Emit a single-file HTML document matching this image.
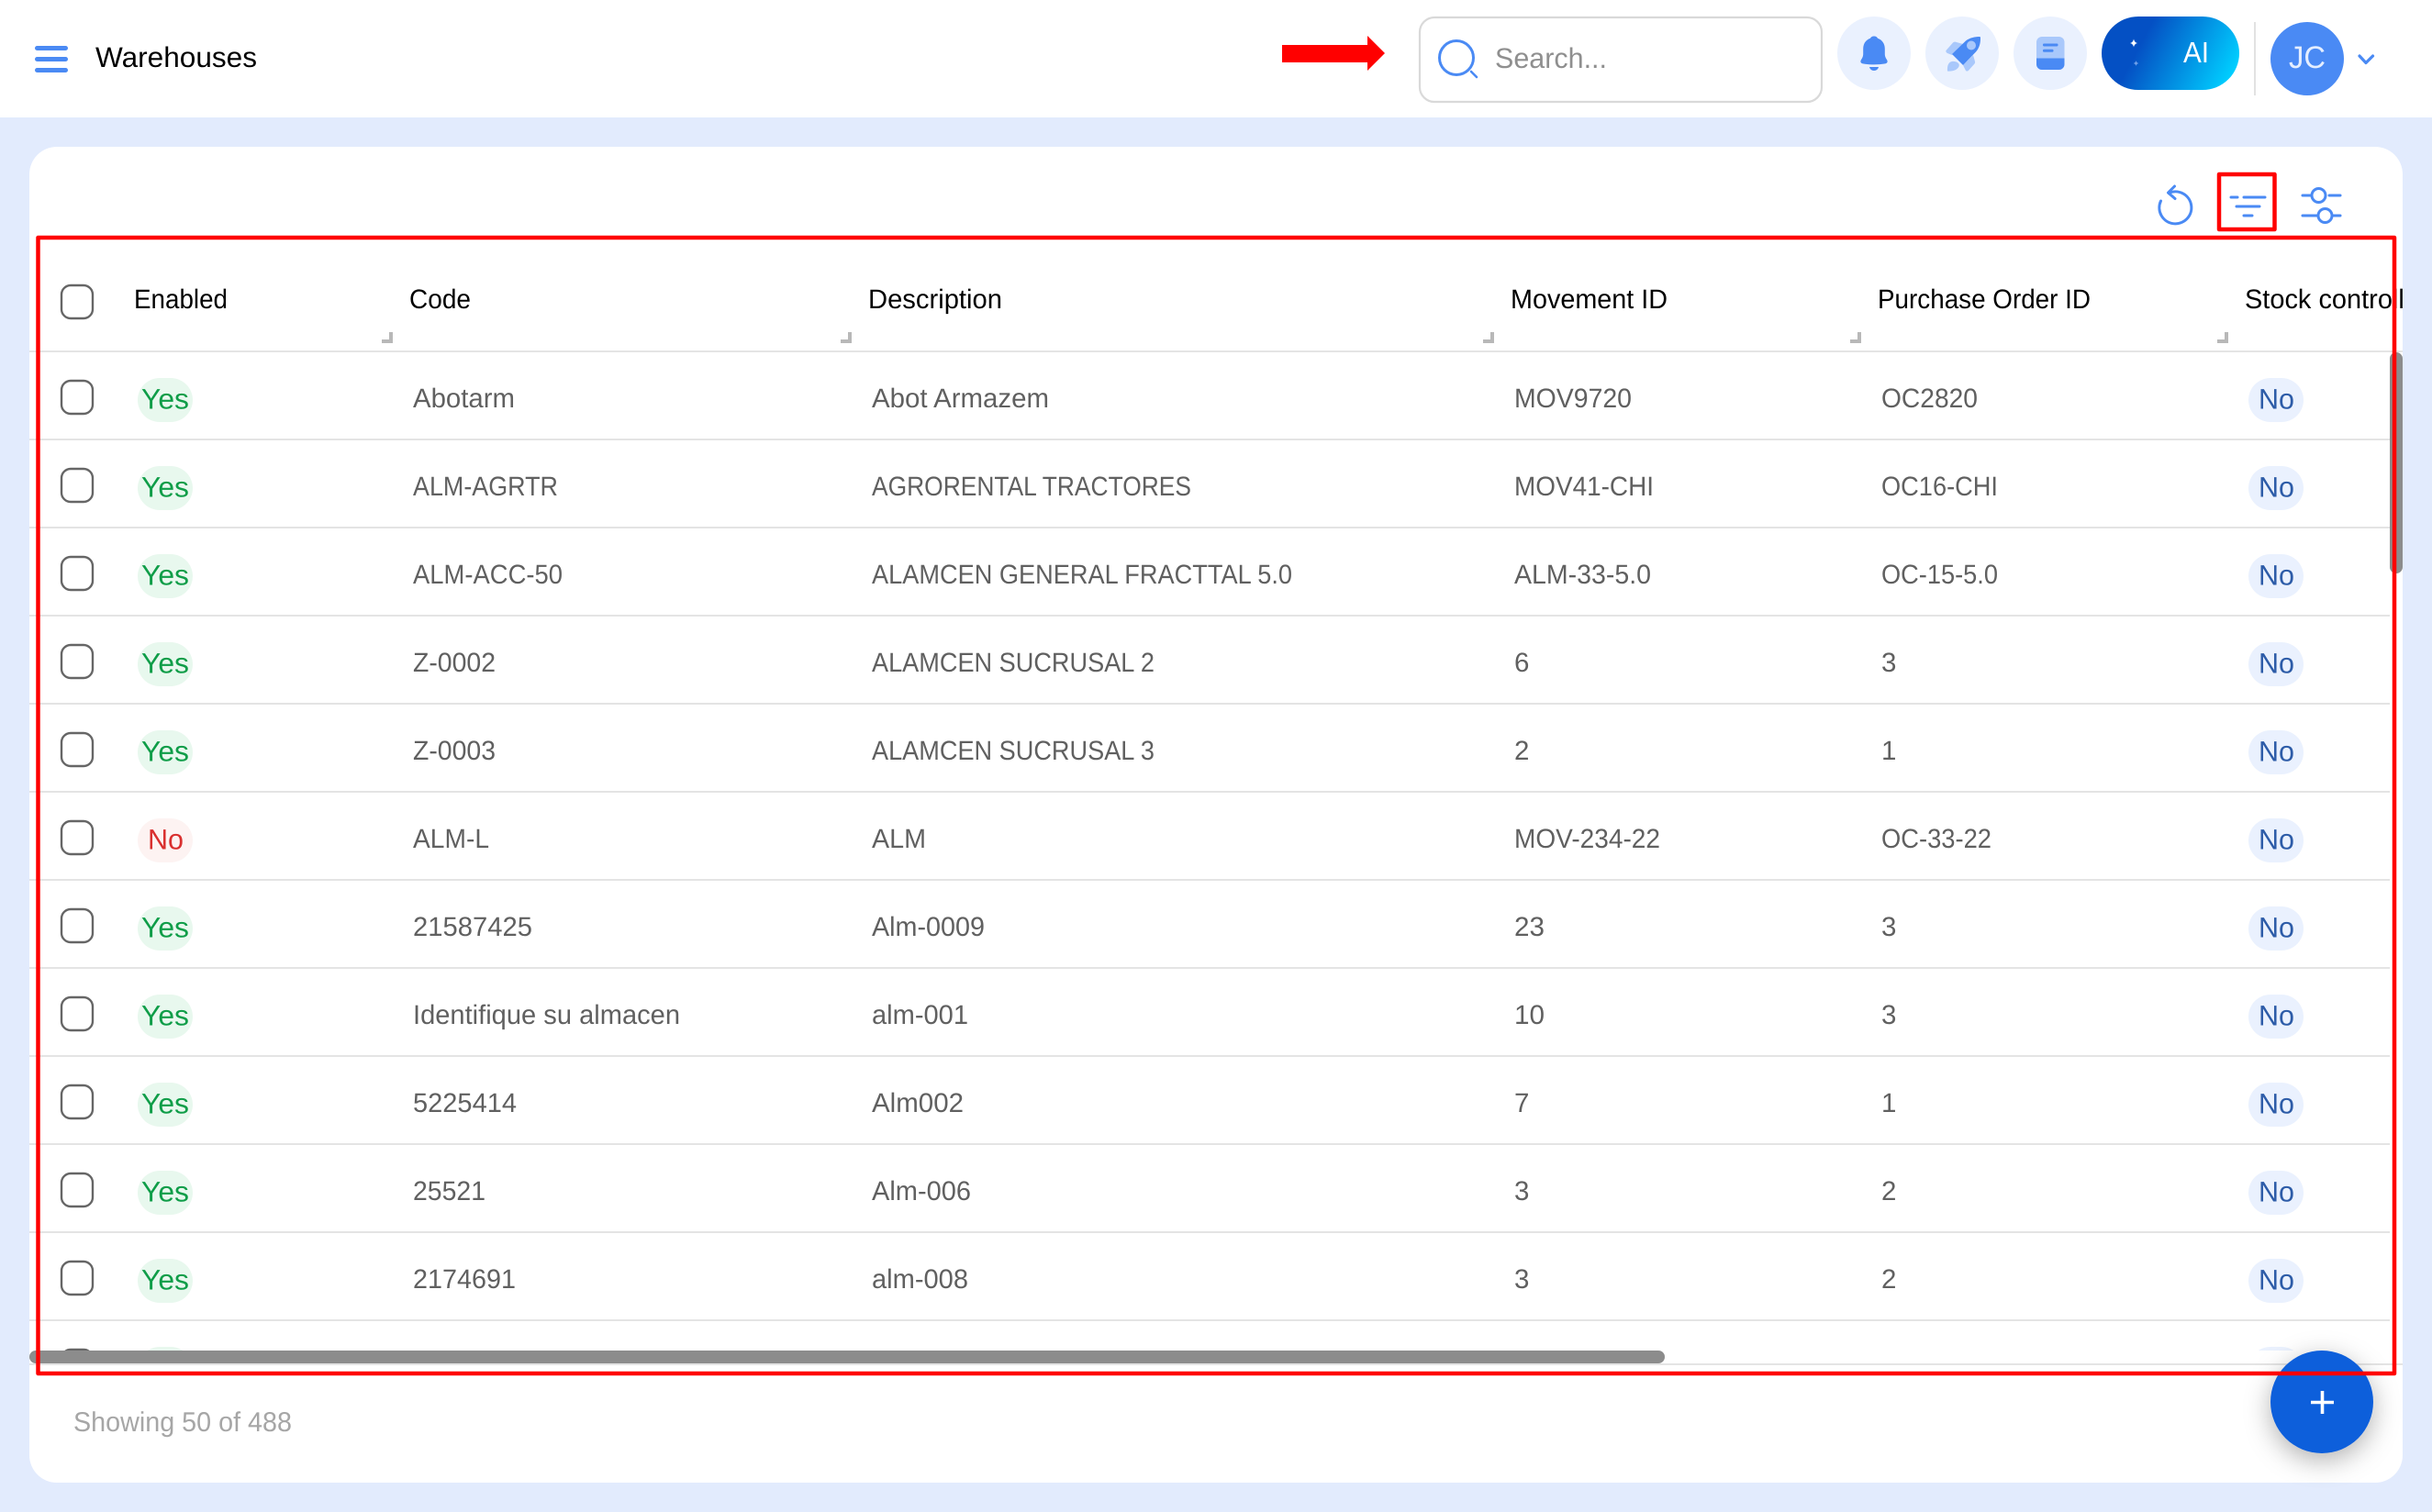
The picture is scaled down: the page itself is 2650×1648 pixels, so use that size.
<!DOCTYPE html>
<html lang="en">
<head>
<meta charset="utf-8">
<title>Warehouses</title>
<style>
html,body{margin:0;padding:0;background:#e2ebfd;width:2650px;height:1648px;overflow:hidden}
svg{display:block}
text{font-family:"Liberation Sans",sans-serif;font-size:29.5px;text-rendering:geometricPrecision}
.h{fill:#000}
.c{fill:#606060}
.y{fill:#0f9d48;font-size:31px}
.n{fill:#2d5ca8;font-size:31px}
.r{fill:#d9302f;font-size:31px}
.cb{fill:#fff;stroke:#666;stroke-width:2.4}
.ln{fill:#e4e4e4}
.ic{fill:none;stroke:#4a8af4;stroke-width:3;stroke-linecap:round;stroke-linejoin:round}
.hd{fill:none;stroke:#b8b8b8;stroke-width:4}
</style>
</head>
<body>
<svg xmlns="http://www.w3.org/2000/svg" width="2650" height="1648" viewBox="0 0 2650 1648">
<defs>
<linearGradient id="ai" x1="0.12" y1="0.35" x2="1" y2="0.6">
<stop offset="0.18" stop-color="#0450c4"/>
<stop offset="1" stop-color="#00ceff"/>
</linearGradient>
<clipPath id="tbl"><rect x="32" y="262" width="2586" height="1210"/></clipPath>
<clipPath id="hdr"><rect x="32" y="262" width="2586" height="120"/></clipPath>
<filter id="sh" x="-60%" y="-60%" width="220%" height="220%"><feDropShadow dx="0" dy="8" stdDeviation="14" flood-color="#000" flood-opacity=".3"/></filter>
<g id="yes"><rect x="150" y="29" width="60" height="48" rx="24" fill="#e8f8ee"/></g>
<g id="nop"><rect x="2450" y="29" width="60" height="48" rx="24" fill="#eaf1fe"/></g>
</defs>

<!-- Page -->
<rect width="2650" height="1648" fill="#e2ebfd"/>
<rect width="2650" height="128" fill="#fff"/>

<!-- Header -->
<rect x="38" y="50" width="36" height="5" rx="2.5" fill="#4a8af4"/>
<rect x="38" y="62" width="36" height="5" rx="2.5" fill="#4a8af4"/>
<rect x="38" y="74" width="36" height="5" rx="2.5" fill="#4a8af4"/>
<text x="104" y="73" style="font-size:31px" fill="#000" textLength="176" lengthAdjust="spacingAndGlyphs">Warehouses</text>

<path d="M1397 49H1490V39L1509 58L1490 77V68H1397Z" fill="#f00"/>

<rect x="1547" y="19" width="438" height="92" rx="16" fill="#fff" stroke="#d9d9d9" stroke-width="2.2"/>
<circle cx="1587" cy="63" r="18.5" fill="none" stroke="#4a8af4" stroke-width="3"/>
<path d="M1603 78L1609 84" fill="none" stroke="#4a8af4" stroke-width="2.6" stroke-linecap="round"/>
<text x="1629" y="74" style="font-size:31px" fill="#8f8f8f" textLength="122" lengthAdjust="spacingAndGlyphs">Search...</text>

<!-- Bell -->
<circle cx="2042" cy="58" r="40" fill="#eaf1fe"/>
<path d="M2042 39.500c2.200 0 3.400 1 4 2.200c4.800 1.600 7.800 5.800 7.800 11.300v5.800c0 2.800 1 4.500 2.200 6.300c1.300 2 .6 3.700-1.700 4.300c-7.500 1.300-17.100 1.300-24.600 0c-2.300-.6-3-2.300-1.700-4.300c1.200-1.800 2.200-3.500 2.200-6.300v-5.800c0-5.500 3-9.700 7.800-11.300c.6-1.200 1.800-2.200 4-2.200z" fill="#4a8af4"/>
<path d="M2037 73h10c-.6 2.600-2.600 4-5 4s-4.400-1.400-5-4z" fill="#4a8af4"/>

<!-- Rocket -->
<circle cx="2138" cy="58" r="40" fill="#eaf1fe"/>
<path d="M2120.500 55L2128 46.500C2128.800 45.700 2130 45.500 2131 45.700L2139 48L2127 60L2122 58C2120.500 57.400 2120 56 2120.500 55Z" fill="#a9c8fb"/>
<path d="M2150 60L2152 67C2152.300 68 2152 69 2151.300 69.800L2145 76.800C2143.800 78 2142 77.800 2141.500 76L2139 71Z" fill="#a9c8fb"/>
<path d="M2122 77.500C2121.500 72 2123 67.500 2127 67C2131.500 66.500 2136 69 2134.500 72.500C2132.500 76.500 2127.500 78 2122 77.500Z" fill="#a9c8fb"/>
<path d="M2127 59L2142 44.500C2146.500 41 2152 40 2157 40C2158 40 2158 41 2158 42C2158 47.500 2156.500 52.500 2153 56.500L2139 71Z" fill="#4a8af4"/>
<circle cx="2148" cy="49.500" r="5" fill="#a9c8fb"/>

<!-- Book -->
<circle cx="2234" cy="58" r="40" fill="#eaf1fe"/>
<rect x="2219" y="40" width="30.500" height="36" rx="6" fill="#a9c8fb"/>
<path d="M2219 63.500H2249.500V70A6 6 0 0 1 2243.500 76H2225A6 6 0 0 1 2219 70Z" fill="#4a8af4"/>
<rect x="2226" y="47.500" width="16.500" height="3" rx="1.200" fill="#4a8af4"/>
<rect x="2226" y="53.800" width="11.500" height="3" rx="1.200" fill="#4a8af4"/>

<!-- AI -->
<rect x="2290" y="18" width="150" height="80" rx="40" fill="url(#ai)"/>
<path d="M2325 42.500Q2325.700 46.300 2329 47Q2325.700 47.700 2325 51.500Q2324.300 47.700 2321 47Q2324.300 46.300 2325 42.500Z" fill="#fff"/>
<path d="M2327.500 66Q2328 68.500 2330.500 69Q2328 69.500 2327.500 72Q2327 69.500 2324.500 69Q2327 68.500 2327.500 66Z" fill="#6f9fe8"/>
<text x="2379" y="68" style="font-size:32px" fill="#fff" textLength="28" lengthAdjust="spacingAndGlyphs">AI</text>

<rect x="2456" y="24" width="2" height="80" fill="#e2e2e2"/>
<circle cx="2514" cy="64" r="40" fill="#4a8af4"/>
<text x="2494" y="74" style="font-size:34px" fill="#e4eeff" textLength="40" lengthAdjust="spacingAndGlyphs">JC</text>
<path d="M2571 61L2578 68.500L2585.500 61" fill="none" stroke="#4a8af4" stroke-width="3.200" stroke-linecap="round" stroke-linejoin="round"/>

<!-- Card -->
<rect x="32" y="160" width="2586" height="1456" rx="30" fill="#fff"/>

<!-- Toolbar icons -->
<path class="ic" d="M2363 210.500A17.500 17.500 0 1 1 2354.500 219"/>
<path class="ic" d="M2369.500 203L2362.500 210L2370 216.500"/>
<path class="ic" d="M2431 215H2438M2445 215H2468M2437 225H2462M2445 235H2454"/>
<path class="ic" d="M2509 213H2518M2538 213H2550M2509 235H2525M2542 235H2550"/>
<circle class="ic" cx="2526.500" cy="213" r="7.500"/>
<circle class="ic" cx="2533.500" cy="235" r="7.500"/>

<!-- Table head -->
<g clip-path="url(#hdr)">
<rect class="cb" x="67" y="311" width="34" height="36" rx="10"/>
<text class="h" x="146" y="336" textLength="102" lengthAdjust="spacingAndGlyphs">Enabled</text>
<text class="h" x="446" y="336" textLength="67" lengthAdjust="spacingAndGlyphs">Code</text>
<text class="h" x="946" y="336" textLength="146" lengthAdjust="spacingAndGlyphs">Description</text>
<text class="h" x="1646" y="336" textLength="171" lengthAdjust="spacingAndGlyphs">Movement ID</text>
<text class="h" x="2046" y="336" textLength="232" lengthAdjust="spacingAndGlyphs">Purchase Order ID</text>
<text class="h" x="2446" y="336" textLength="206" lengthAdjust="spacingAndGlyphs">Stock controlled</text>
<path class="hd" d="M416 372H426V362M916 372H926V362M1616 372H1626V362M2016 372H2026V362M2416 372H2426V362"/>
</g>
<rect class="ln" x="32" y="382" width="2586" height="2"/>

<!-- Rows -->
<g clip-path="url(#tbl)">
<g transform="translate(0,383)">
<rect class="cb" x="67" y="32" width="34" height="36" rx="10"/><use href="#yes"/><text class="y" x="154" y="62.500" textLength="52" lengthAdjust="spacingAndGlyphs">Yes</text>
<text class="c" x="450" y="61" textLength="111" lengthAdjust="spacingAndGlyphs">Abotarm</text>
<text class="c" x="950" y="61" textLength="193" lengthAdjust="spacingAndGlyphs">Abot Armazem</text>
<text class="c" x="1650" y="61" textLength="128" lengthAdjust="spacingAndGlyphs">MOV9720</text>
<text class="c" x="2050" y="61" textLength="105" lengthAdjust="spacingAndGlyphs">OC2820</text>
<use href="#nop"/><text class="n" x="2461" y="62.500" textLength="39" lengthAdjust="spacingAndGlyphs">No</text>
<rect class="ln" x="32" y="95" width="2572" height="2"/>
</g>
<g transform="translate(0,479)">
<rect class="cb" x="67" y="32" width="34" height="36" rx="10"/><use href="#yes"/><text class="y" x="154" y="62.500" textLength="52" lengthAdjust="spacingAndGlyphs">Yes</text>
<text class="c" x="450" y="61" textLength="158" lengthAdjust="spacingAndGlyphs">ALM-AGRTR</text>
<text class="c" x="950" y="61" textLength="348" lengthAdjust="spacingAndGlyphs">AGRORENTAL TRACTORES</text>
<text class="c" x="1650" y="61" textLength="152" lengthAdjust="spacingAndGlyphs">MOV41-CHI</text>
<text class="c" x="2050" y="61" textLength="127" lengthAdjust="spacingAndGlyphs">OC16-CHI</text>
<use href="#nop"/><text class="n" x="2461" y="62.500" textLength="39" lengthAdjust="spacingAndGlyphs">No</text>
<rect class="ln" x="32" y="95" width="2572" height="2"/>
</g>
<g transform="translate(0,575)">
<rect class="cb" x="67" y="32" width="34" height="36" rx="10"/><use href="#yes"/><text class="y" x="154" y="62.500" textLength="52" lengthAdjust="spacingAndGlyphs">Yes</text>
<text class="c" x="450" y="61" textLength="163" lengthAdjust="spacingAndGlyphs">ALM-ACC-50</text>
<text class="c" x="950" y="61" textLength="458" lengthAdjust="spacingAndGlyphs">ALAMCEN GENERAL FRACTTAL 5.0</text>
<text class="c" x="1650" y="61" textLength="149" lengthAdjust="spacingAndGlyphs">ALM-33-5.0</text>
<text class="c" x="2050" y="61" textLength="127" lengthAdjust="spacingAndGlyphs">OC-15-5.0</text>
<use href="#nop"/><text class="n" x="2461" y="62.500" textLength="39" lengthAdjust="spacingAndGlyphs">No</text>
<rect class="ln" x="32" y="95" width="2572" height="2"/>
</g>
<g transform="translate(0,671)">
<rect class="cb" x="67" y="32" width="34" height="36" rx="10"/><use href="#yes"/><text class="y" x="154" y="62.500" textLength="52" lengthAdjust="spacingAndGlyphs">Yes</text>
<text class="c" x="450" y="61" textLength="90" lengthAdjust="spacingAndGlyphs">Z-0002</text>
<text class="c" x="950" y="61" textLength="308" lengthAdjust="spacingAndGlyphs">ALAMCEN SUCRUSAL 2</text>
<text class="c" x="1650" y="61">6</text>
<text class="c" x="2050" y="61">3</text>
<use href="#nop"/><text class="n" x="2461" y="62.500" textLength="39" lengthAdjust="spacingAndGlyphs">No</text>
<rect class="ln" x="32" y="95" width="2572" height="2"/>
</g>
<g transform="translate(0,767)">
<rect class="cb" x="67" y="32" width="34" height="36" rx="10"/><use href="#yes"/><text class="y" x="154" y="62.500" textLength="52" lengthAdjust="spacingAndGlyphs">Yes</text>
<text class="c" x="450" y="61" textLength="90" lengthAdjust="spacingAndGlyphs">Z-0003</text>
<text class="c" x="950" y="61" textLength="308" lengthAdjust="spacingAndGlyphs">ALAMCEN SUCRUSAL 3</text>
<text class="c" x="1650" y="61">2</text>
<text class="c" x="2050" y="61">1</text>
<use href="#nop"/><text class="n" x="2461" y="62.500" textLength="39" lengthAdjust="spacingAndGlyphs">No</text>
<rect class="ln" x="32" y="95" width="2572" height="2"/>
</g>
<g transform="translate(0,863)">
<rect class="cb" x="67" y="32" width="34" height="36" rx="10"/><rect x="150" y="29" width="60" height="48" rx="24" fill="#fdf3f2"/><text class="r" x="161" y="62.500" textLength="39" lengthAdjust="spacingAndGlyphs">No</text>
<text class="c" x="450" y="61" textLength="83" lengthAdjust="spacingAndGlyphs">ALM-L</text>
<text class="c" x="950" y="61" textLength="59" lengthAdjust="spacingAndGlyphs">ALM</text>
<text class="c" x="1650" y="61" textLength="159" lengthAdjust="spacingAndGlyphs">MOV-234-22</text>
<text class="c" x="2050" y="61" textLength="120" lengthAdjust="spacingAndGlyphs">OC-33-22</text>
<use href="#nop"/><text class="n" x="2461" y="62.500" textLength="39" lengthAdjust="spacingAndGlyphs">No</text>
<rect class="ln" x="32" y="95" width="2572" height="2"/>
</g>
<g transform="translate(0,959)">
<rect class="cb" x="67" y="32" width="34" height="36" rx="10"/><use href="#yes"/><text class="y" x="154" y="62.500" textLength="52" lengthAdjust="spacingAndGlyphs">Yes</text>
<text class="c" x="450" y="61" textLength="130" lengthAdjust="spacingAndGlyphs">21587425</text>
<text class="c" x="950" y="61" textLength="123" lengthAdjust="spacingAndGlyphs">Alm-0009</text>
<text class="c" x="1650" y="61" textLength="33" lengthAdjust="spacingAndGlyphs">23</text>
<text class="c" x="2050" y="61">3</text>
<use href="#nop"/><text class="n" x="2461" y="62.500" textLength="39" lengthAdjust="spacingAndGlyphs">No</text>
<rect class="ln" x="32" y="95" width="2572" height="2"/>
</g>
<g transform="translate(0,1055)">
<rect class="cb" x="67" y="32" width="34" height="36" rx="10"/><use href="#yes"/><text class="y" x="154" y="62.500" textLength="52" lengthAdjust="spacingAndGlyphs">Yes</text>
<text class="c" x="450" y="61" textLength="291" lengthAdjust="spacingAndGlyphs">Identifique su almacen</text>
<text class="c" x="950" y="61" textLength="105" lengthAdjust="spacingAndGlyphs">alm-001</text>
<text class="c" x="1650" y="61" textLength="33" lengthAdjust="spacingAndGlyphs">10</text>
<text class="c" x="2050" y="61">3</text>
<use href="#nop"/><text class="n" x="2461" y="62.500" textLength="39" lengthAdjust="spacingAndGlyphs">No</text>
<rect class="ln" x="32" y="95" width="2572" height="2"/>
</g>
<g transform="translate(0,1151)">
<rect class="cb" x="67" y="32" width="34" height="36" rx="10"/><use href="#yes"/><text class="y" x="154" y="62.500" textLength="52" lengthAdjust="spacingAndGlyphs">Yes</text>
<text class="c" x="450" y="61" textLength="113" lengthAdjust="spacingAndGlyphs">5225414</text>
<text class="c" x="950" y="61" textLength="100" lengthAdjust="spacingAndGlyphs">Alm002</text>
<text class="c" x="1650" y="61">7</text>
<text class="c" x="2050" y="61">1</text>
<use href="#nop"/><text class="n" x="2461" y="62.500" textLength="39" lengthAdjust="spacingAndGlyphs">No</text>
<rect class="ln" x="32" y="95" width="2572" height="2"/>
</g>
<g transform="translate(0,1247)">
<rect class="cb" x="67" y="32" width="34" height="36" rx="10"/><use href="#yes"/><text class="y" x="154" y="62.500" textLength="52" lengthAdjust="spacingAndGlyphs">Yes</text>
<text class="c" x="450" y="61" textLength="79" lengthAdjust="spacingAndGlyphs">25521</text>
<text class="c" x="950" y="61" textLength="108" lengthAdjust="spacingAndGlyphs">Alm-006</text>
<text class="c" x="1650" y="61">3</text>
<text class="c" x="2050" y="61">2</text>
<use href="#nop"/><text class="n" x="2461" y="62.500" textLength="39" lengthAdjust="spacingAndGlyphs">No</text>
<rect class="ln" x="32" y="95" width="2572" height="2"/>
</g>
<g transform="translate(0,1343)">
<rect class="cb" x="67" y="32" width="34" height="36" rx="10"/><use href="#yes"/><text class="y" x="154" y="62.500" textLength="52" lengthAdjust="spacingAndGlyphs">Yes</text>
<text class="c" x="450" y="61" textLength="112" lengthAdjust="spacingAndGlyphs">2174691</text>
<text class="c" x="950" y="61" textLength="105" lengthAdjust="spacingAndGlyphs">alm-008</text>
<text class="c" x="1650" y="61">3</text>
<text class="c" x="2050" y="61">2</text>
<use href="#nop"/><text class="n" x="2461" y="62.500" textLength="39" lengthAdjust="spacingAndGlyphs">No</text>
<rect class="ln" x="32" y="95" width="2572" height="2"/>
</g>
<g transform="translate(0,1439)">
<rect class="cb" x="67" y="32" width="34" height="36" rx="10"/><use href="#yes"/><use href="#nop"/>
</g>
</g>

<!-- Scrollbars -->
<rect class="ln" x="32" y="1486" width="2586" height="2"/>
<rect x="32" y="1472" width="1782" height="14" rx="7" fill="#8c8c8c"/>
<rect x="2604" y="384" width="14" height="241" rx="7" fill="#8c8c8c"/>

<!-- Footer -->
<text x="80" y="1560" style="font-size:30px" fill="#a6a6a6" textLength="238" lengthAdjust="spacingAndGlyphs">Showing 50 of 488</text>

<!-- FAB -->
<circle cx="2530" cy="1528" r="56" fill="#115fdb" filter="url(#sh)"/>
<path d="M2518 1528.500H2543M2530.500 1516V1541" stroke="#fff" stroke-width="3.600" fill="none"/>

<!-- Annotations -->
<rect x="41.500" y="259" width="2567.500" height="1238" fill="none" stroke="#f00" stroke-width="4.500" stroke-linejoin="round"/>
<rect x="2418" y="190" width="60.500" height="60" fill="none" stroke="#f00" stroke-width="4.500" stroke-linejoin="round"/>
</svg>
</body>
</html>
